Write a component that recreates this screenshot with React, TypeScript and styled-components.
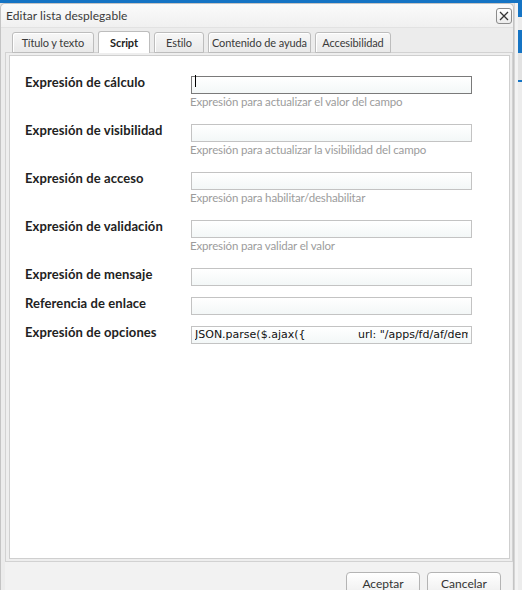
import React from "react";
import styled, { createGlobalStyle } from "styled-components";

const Global = createGlobalStyle`
  html, body { margin: 0; padding: 0; }
  body {
    width: 522px;
    height: 590px;
    overflow: hidden;
    background: #e4e4e4;
    font-family: Lato, "Noto Sans", sans-serif;
  }
`;

const Screen = styled.div`
  width: 522px;
  height: 590px;
  display: flex;
  flex-direction: column;
  overflow: hidden;
`;

const AppBar = styled.div`
  height: 3px;
  flex: none;
  background: #1574c4;
`;

const Stage = styled.div`
  flex: 1;
  display: flex;
  min-height: 0;
`;

const Dialog = styled.div`
  width: 514px;
  flex: none;
  box-sizing: border-box;
  border: 1px solid #c4c4c4;
  border-bottom: none;
  border-radius: 5px 5px 0 0;
  background: #f2f2f2;
  display: flex;
  flex-direction: column;
`;

const BackPage = styled.div`
  flex: 1;
  display: flex;
  flex-direction: row;
`;

const BackGutter = styled.div`
  width: 3px;
  background: #f3f3f3;
  border-left: 1px solid #d6d6d6;
`;

const BackColumn = styled.div`
  flex: 1;
  display: flex;
  flex-direction: column;
  background: #ececec;
`;

const BackBlock = styled.div<{ $h: number; $c: string }>`
  height: ${(p) => p.$h}px;
  flex: none;
  background: ${(p) => p.$c};
`;

const TitleBar = styled.div`
  height: 23px;
  flex: none;
  display: flex;
  align-items: center;
  justify-content: space-between;
  padding: 0 1px 0 5px;
  background: linear-gradient(#fbfbfb, #f0f0f0);
  border-radius: 5px 5px 0 0;
  border-bottom: 1px solid #e2e2e2;
`;

const Title = styled.span`
  font-size: 12px;
  color: #3a3a3a;
  letter-spacing: 0.05px;
`;

const CloseButton = styled.button`
  width: 16px;
  height: 16px;
  padding: 0;
  display: flex;
  align-items: center;
  justify-content: center;
  border: 1px solid #8c8c8c;
  border-radius: 3px;
  background: linear-gradient(#ffffff, #ececec);
`;

const Body = styled.div`
  flex: 1;
  display: flex;
  flex-direction: column;
  padding: 3px 1px 0 4px;
  background: #ececec;
`;

const TabStrip = styled.div`
  display: flex;
  align-items: flex-end;
  gap: 4px;
  padding-left: 7px;
  height: 22px;
  position: relative;
  z-index: 1;
  margin-bottom: -1px;
`;

const Tab = styled.div<{ $active?: boolean; $w: number }>`
  box-sizing: border-box;
  width: ${(p) => p.$w}px;
  height: ${(p) => (p.$active ? 22 : 21)}px;
  display: flex;
  align-items: center;
  justify-content: center;
  white-space: nowrap;
  font-size: 11px;
  letter-spacing: -0.1px;
  font-weight: ${(p) => (p.$active ? 700 : 400)};
  color: ${(p) => (p.$active ? "#222" : "#3a3a3a")};
  border: 1px solid #bdbdbd;
  border-bottom: ${(p) => (p.$active ? "none" : "1px solid #bdbdbd")};
  border-radius: 3px 3px 0 0;
  background: ${(p) =>
    p.$active ? "#ffffff" : "linear-gradient(#f7f7f7, #e9e9e9)"};
  box-shadow: inset 1px 1px 0 #ffffff;
`;

const PanelFrame = styled.div`
  height: 510px;
  box-sizing: border-box;
  border: 1px solid #d2d2d2;
  padding: 2px 2px 2px 3px;
  width: 508px;
  background: #eeeeee;
`;

const Panel = styled.div`
  height: 100%;
  box-sizing: border-box;
  border: 1px solid #cfcfcf;
  background: #ffffff;
  padding: 16px 0 0 15px;
  display: flex;
  flex-direction: column;
`;

const Field = styled.div`
  display: flex;
  flex-direction: column;
  margin-bottom: 11px;
`;

const FieldRow = styled.div`
  display: flex;
  align-items: center;
  height: 18px;
`;

const Label = styled.label`
  width: 166px;
  flex: none;
  font-size: 13px;
  font-weight: 700;
  color: #222;
  letter-spacing: 0.1px;
  padding-top: 2px;
`;

const InputWrap = styled.div`
  position: relative;
  width: 281px;
  height: 18px;
`;

const TextInput = styled.input<{ $focused?: boolean }>`
  box-sizing: border-box;
  width: 100%;
  height: 100%;
  margin: 0;
  padding: 0 3px;
  border: 1px solid ${(p) => (p.$focused ? "#7a7a7a" : "#c3c3c3")};
  border-radius: 0;
  background: linear-gradient(#ffffff, #f3f7f7);
  font-family: "DejaVu Sans", sans-serif;
  font-size: 11px;
  color: #111;
  white-space: pre;
  outline: none;
`;

const Caret = styled.span`
  position: absolute;
  left: 4px;
  top: 3px;
  width: 1px;
  height: 12px;
  background: #000;
`;

const Help = styled.div`
  margin: 5px 0 0 165px;
  height: 14px;
  line-height: 14px;
  font-size: 11.5px;
  color: #9c9c9c;
  letter-spacing: -0.15px;
`;

const Footer = styled.div`
  flex: 1;
  display: flex;
  justify-content: flex-end;
  align-items: flex-start;
  gap: 7px;
  padding: 10px 11px 0 0;
  background: #f2f2f2;
`;

const Button = styled.button`
  box-sizing: border-box;
  width: 74px;
  height: 24px;
  border: 1px solid #b4b4b4;
  border-radius: 4px;
  background: linear-gradient(#ffffff, #eeeeee);
  font-family: Lato, "Noto Sans", sans-serif;
  font-size: 12px;
  color: #333;
  padding: 0 0 2px;
`;

type FieldDef = { label: string; help?: string; value?: string; focused?: boolean };

const fields: FieldDef[] = [
  { label: "Expresión de cálculo", help: "Expresión para actualizar el valor del campo", focused: true },
  { label: "Expresión de visibilidad", help: "Expresión para actualizar la visibilidad del campo" },
  { label: "Expresión de acceso", help: "Expresión para habilitar/deshabilitar" },
  { label: "Expresión de validación", help: "Expresión para validar el valor" },
  { label: "Expresión de mensaje" },
  { label: "Referencia de enlace" },
  {
    label: "Expresión de opciones",
    value: 'JSON.parse($.ajax({               url: "/apps/fd/af/demo/options.json",',
  },
];

const tabs = [
  { label: "Título y texto", w: 82 },
  { label: "Script", w: 52, active: true },
  { label: "Estilo", w: 50 },
  { label: "Contenido de ayuda", w: 103 },
  { label: "Accesibilidad", w: 76 },
];

const CloseIcon = () => (
  <svg width="10" height="10" viewBox="0 0 10 10">
    <path d="M1 1 L9 9 M9 1 L1 9" stroke="#333" strokeWidth="1.3" fill="none" />
  </svg>
);

export default function App() {
  return (
    <Screen>
      <Global />
      <AppBar />
      <Stage>
        <Dialog>
          <TitleBar>
            <Title>Editar lista desplegable</Title>
            <CloseButton aria-label="Cerrar">
              <CloseIcon />
            </CloseButton>
          </TitleBar>
          <Body>
            <TabStrip>
              {tabs.map((t) => (
                <Tab key={t.label} $w={t.w} $active={t.active}>
                  {t.label}
                </Tab>
              ))}
            </TabStrip>
            <PanelFrame>
              <Panel>
                {fields.map((f) => (
                  <Field key={f.label}>
                    <FieldRow>
                      <Label>{f.label}</Label>
                      <InputWrap>
                        <TextInput
                          $focused={f.focused}
                          defaultValue={f.value ?? ""}
                          readOnly
                        />
                        {f.focused && <Caret />}
                      </InputWrap>
                    </FieldRow>
                    {f.help && <Help>{f.help}</Help>}
                  </Field>
                ))}
              </Panel>
            </PanelFrame>
            <Footer>
              <Button>Aceptar</Button>
              <Button>Cancelar</Button>
            </Footer>
          </Body>
        </Dialog>
        <BackPage>
          <BackGutter />
          <BackColumn>
            <BackBlock $h={14} $c="#1574c4" />
            <BackBlock $h={13} $c="#ececec" />
            <BackBlock $h={23} $c="#1574c4" />
            <BackBlock $h={27} $c="#e2e2e2" />
            <BackBlock $h={2} $c="#1574c4" />
          </BackColumn>
        </BackPage>
      </Stage>
    </Screen>
  );
}
